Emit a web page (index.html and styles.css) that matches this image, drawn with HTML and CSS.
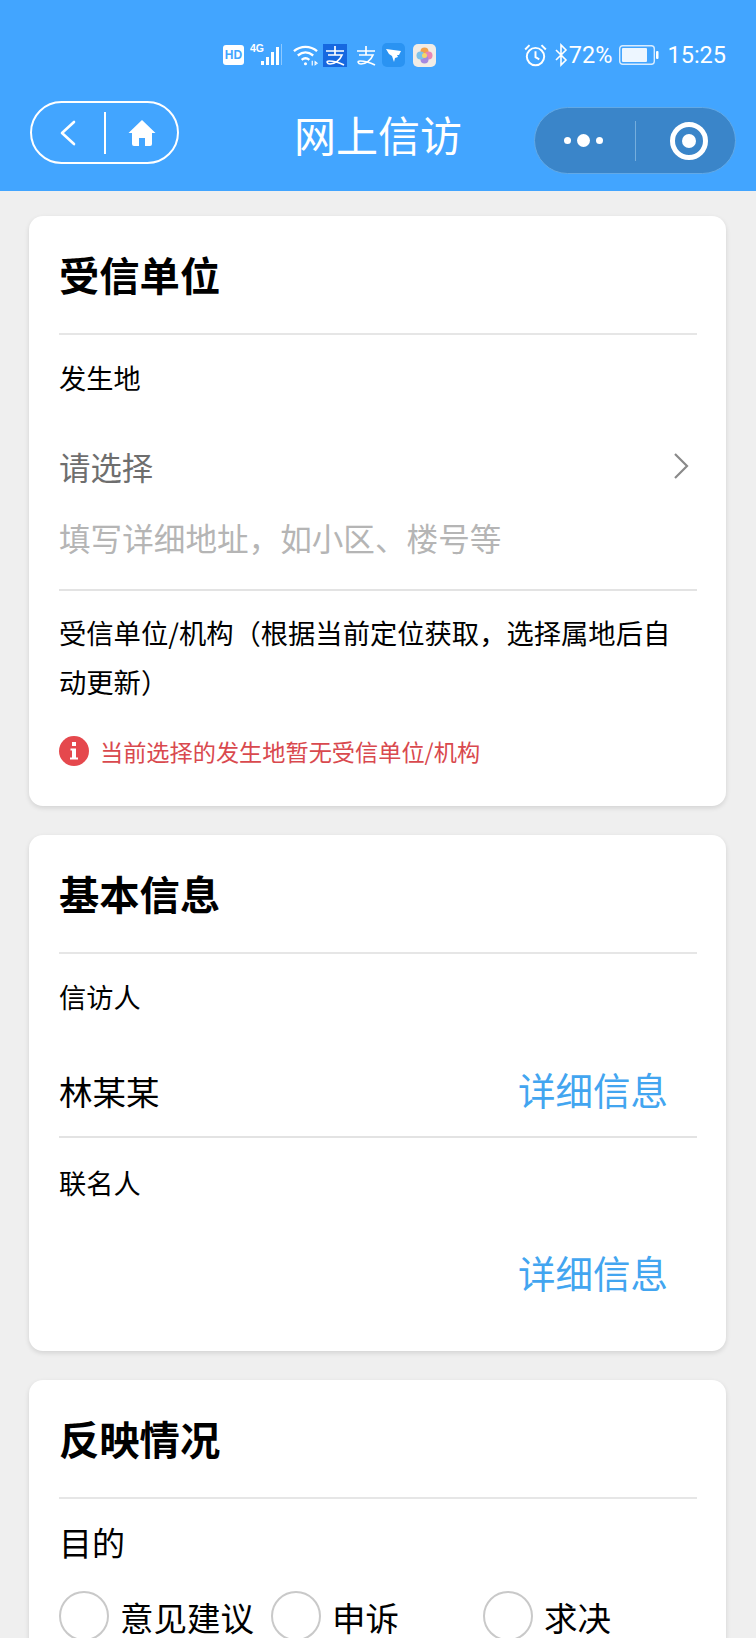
FILE: index.html
```html
<!DOCTYPE html>
<html lang="zh">
<head>
<meta charset="utf-8">
<title>网上信访</title>
<link rel="stylesheet" href="styles.css">
</head>
<body>
<header class="top">
  <div class="status">
    <div class="status-mid">
      <span class="hd">HD</span>
      <svg class="ic signal" width="33" height="24" viewBox="0 0 33 24"><text x="0" y="9" class="tiny">4G</text><g fill="#fff"><rect x="11" y="18" width="3" height="4"/><rect x="16" y="14" width="3" height="8"/><rect x="21" y="9" width="3" height="13"/><rect x="26" y="4" width="3" height="18"/></g><rect x="31" y="1" width="1" height="21" fill="#fff" opacity=".4"/></svg>
      <svg class="ic wifi" width="27" height="24" viewBox="0 0 28 24" fill="none" stroke="#fff" stroke-width="2.400"><path d="M2 8c7-6 17-6 24 0"/><path d="M6 12.500c5-4 11-4 16 0"/><path d="M10 17c2.500-2 5.500-2 8 0"/><circle cx="14" cy="21" r="1.600" fill="#fff" stroke="none"/><path d="M21 18v5M24 19l2 1.500-2 1.500z" stroke-width="1.200"/></svg>
      <svg class="pay" width="24" height="23" viewBox="0 0 24 23"><rect width="24" height="23" fill="#1668e0"/><path d="M3 7h18M12 2v9M5 11h14c-2 5-7 9-12 9-3 0-4-3-1-3 4 0 9 1 15 4" fill="none" stroke="#fff" stroke-width="1.700"/></svg>
      <svg class="ic zhi" width="24" height="23" viewBox="0 0 24 23"><path d="M3 7h18M12 2v9M5 11h14c-2 5-7 9-12 9-3 0-4-3-1-3 4 0 9 1 15 4" fill="none" stroke="#fff" stroke-width="1.700"/></svg>
      <svg class="ic shield" width="23" height="24" viewBox="0 0 23 24"><rect width="23" height="24" rx="5" fill="#2a93f2"/><path d="M4 6l15 2-2 4-2 0 1 2-3 1-1 4-2-6-3-2z" fill="#fff"/></svg>
      <svg class="ic" width="23" height="23" viewBox="0 0 23 23"><rect width="23" height="23" rx="5" fill="#f1ece6"/><circle cx="11.500" cy="7.500" r="4" fill="#f3a14b"/><circle cx="15.500" cy="11.500" r="4" fill="#e887b5"/><circle cx="11.500" cy="15.500" r="4" fill="#a58ae0"/><circle cx="7.500" cy="11.500" r="4" fill="#7cc2ea"/><circle cx="11.500" cy="11.500" r="2.500" fill="#f6d66a"/></svg>
    </div>
    <div class="status-right">
      <svg class="ic" width="25" height="25" viewBox="0 0 23 23" fill="none" stroke="#fff" stroke-width="1.800"><circle cx="11.500" cy="12.500" r="8"/><path d="M11.500 7.500v5.500l3.500 2M2 6l4-4M21 6l-4-4"/></svg>
      <svg class="ic bt" width="14" height="24" viewBox="0 0 14 24" fill="none" stroke="#fff" stroke-width="1.600"><path d="M2 7l10 10-5 5V2l5 5L2 17"/></svg>
      <span class="pct">72%</span>
      <svg class="ic batt" width="40" height="20" viewBox="0 0 40 20"><rect x=".7" y=".7" width="34.600" height="18.600" rx="3" fill="none" stroke="#d8ecff" stroke-width="1.400"/><rect x="3" y="3" width="25" height="14" rx="1" fill="#edf6ff"/><rect x="37" y="6" width="2.500" height="8" rx="1" fill="#fff"/></svg>
      <span class="time">15:25</span>
    </div>
  </div>
  <div class="nav">
    <div class="capsule-back">
      <svg width="18" height="26" viewBox="0 0 18 26" fill="none" stroke="#fff" stroke-width="2.600" stroke-linecap="round" stroke-linejoin="round"><path d="M15 2L3 13l12 11"/></svg>
      <span class="back-sep"></span>
      <svg width="28" height="28" viewBox="0 0 28 28" fill="#fff"><path d="M14 1L0.500 14H4v11a2 2 0 0 0 2 2h5v-8h6v8h5a2 2 0 0 0 2-2V14h3.500z"/></svg>
    </div>
    <h1 class="nav-title">网上信访</h1>
    <div class="capsule-menu">
      <div class="dots"><i></i><b></b><i></i></div>
      <span class="menu-sep"></span>
      <div class="target"><i></i></div>
    </div>
  </div>
</header>

<main class="page">
  <section class="card">
    <h2 class="card-title">受信单位</h2>
    <div class="label first">发生地</div>
    <div class="select"><span>请选择</span>
      <svg width="16" height="28" viewBox="0 0 16 28" fill="none" stroke="#8a8a8a" stroke-width="2.200"><path d="M2 2l12 12L2 26"/></svg>
    </div>
    <div class="placeholder">填写详细地址，如小区、楼号等</div>
    <div class="label org">受信单位/机构（根据当前定位获取，选择属地后自动更新）</div>
    <div class="error">
      <svg width="30" height="30" viewBox="0 0 30 30"><circle cx="15" cy="15" r="15" fill="#e5484d"/><path d="M13 6h4v4h-4zM11.500 12.500h5.500v9h2v2h-8v-2h2v-7h-1.500z" fill="#fff"/></svg>
      <span>当前选择的发生地暂无受信单位/机构</span>
    </div>
  </section>

  <section class="card">
    <h2 class="card-title">基本信息</h2>
    <div class="label first">信访人</div>
    <div class="row bordered"><span class="name">林某某</span><span class="link">详细信息</span></div>
    <div class="label second">联名人</div>
    <div class="row"><span class="name"></span><span class="link">详细信息</span></div>
  </section>

  <section class="card last">
    <h2 class="card-title">反映情况</h2>
    <div class="label big">目的</div>
    <div class="radios">
      <div class="radio"><i></i><span>意见建议</span></div>
      <div class="radio"><i></i><span>申诉</span></div>
      <div class="radio"><i></i><span>求决</span></div>
    </div>
  </section>
</main>
</body>
</html>
```

FILE: styles.css
```css
* { box-sizing: border-box; }
html, body { margin: 0; padding: 0; }
body {
  width: 756px;
  height: 1638px;
  overflow: hidden;
  background: #efefef;
  color: #000;
  font-family: "Noto Sans CJK SC", "Noto Sans", sans-serif;
}
.top {
  height: 191px;
  background: #42a5ff;
  color: #fff;
  display: flex;
  flex-direction: column;
}
.status {
  height: 101px;
  padding: 42px 30px 0 223px;
  display: flex;
  justify-content: space-between;
  align-items: flex-start;
}
.status-mid, .status-right { display: flex; align-items: center; height: 26px; }
.ic, .pay { display: block; flex: none; }
.tiny { font: bold 10.500px "Liberation Sans", sans-serif; fill: #fff; }
.hd {
  width: 21px; height: 20px; margin-right: 6px; background: #fff; border-radius: 3px;
  color: #42a5ff; font: bold 12px/20px "Liberation Sans", sans-serif; text-align: center;
}
.signal { margin-right: 9px; }
.wifi { margin-right: 4px; }
.pay { margin-right: 7px; }
.zhi { margin-right: 4px; }
.shield { margin-right: 8px; }
.bt { margin-left: 6px; }
.pct, .time { font: 23.500px/26px Roboto, sans-serif; color: #fff; }
.pct { margin-left: 1px; }
.batt { margin-left: 7px; }
.time { margin-left: 8px; }
.nav {
  height: 90px;
  position: relative;
  padding: 0 20px 0 30px;
  display: flex;
  justify-content: space-between;
  align-items: flex-start;
}
.capsule-back {
  width: 149px; height: 63px; border: 2px solid #fff; border-radius: 32px;
  display: flex; align-items: center;
  padding-left: 27px;
}
.back-sep { width: 2px; height: 42px; background: #fff; margin: 0 22px 0 27px; }
.nav-title {
  position: absolute; left: 0; right: 0; top: 5px; margin: 0;
  text-align: center; font-size: 42px; line-height: 56px; font-weight: 400; color: #fff;
}
.capsule-menu {
  width: 202px; height: 67px; margin-top: 6px; border-radius: 34px;
  background: #3a85c9; border: 1px solid #62a9e6;
  display: flex; align-items: center;
  padding-left: 29px;
}
.dots { display: flex; align-items: center; gap: 6px; width: 39px; flex: none; }
.dots i { width: 7px; height: 7px; border-radius: 50%; background: #fff; flex: none; }
.dots b { width: 13px; height: 13px; border-radius: 50%; background: #fff; flex: none; }
.menu-sep { width: 1px; height: 40px; background: #75aedd; margin-left: 32px; flex: none; }
.target {
  width: 38px; height: 38px; margin-left: 34px; border: 5px solid #fff; border-radius: 50%;
  display: flex; align-items: center; justify-content: center; flex: none;
}
.target i { width: 14px; height: 14px; border-radius: 50%; background: #fff; }

.page { padding: 25px 30px 0 29px; display: flex; flex-direction: column; gap: 29px; }
.card {
  background: #fff; border-radius: 14px; padding: 0 29px 0 30px;
  box-shadow: 0 2px 5px rgba(0,0,0,.12);
}
.card-title {
  margin: 0; height: 119px; border-bottom: 2px solid #e6e6e6;
  font-size: 40.300px; line-height: 116px; font-weight: 700;
}
.label { font-size: 27.200px; line-height: 44px; }
.first { margin-top: 20px; }
.select {
  margin-top: 37px; height: 60px; display: flex; align-items: center; justify-content: space-between;
  color: #6e6e6e; font-size: 31.400px; padding-right: 8px;
}
.placeholder {
  margin-top: 16px; height: 79px; border-bottom: 2px solid #e3e3e3;
  color: #b5b5b5; font-size: 31.600px; line-height: 50px; white-space: nowrap;
}
.org { margin-top: 17px; line-height: 49px; font-size: 27.300px; padding-right: 26px; }
.error {
  margin-top: 28px; padding-bottom: 38px; display: flex; align-items: center; gap: 11px;
  color: #d9494e; font-size: 23.200px; line-height: 34px;
}
.row {
  height: 72px; display: flex; align-items: center; justify-content: space-between; padding-right: 29px;
}
.bordered { margin-top: 26px; height: 94px; border-bottom: 2px solid #e3e3e3; }
.name { font-size: 33.500px; }
.link { color: #42a5f0; font-size: 37.500px; margin-bottom: 4px; }
.second { margin-top: 22px; }
.row:last-child { margin-top: 33px; margin-bottom: 42px; }
.last { padding-bottom: 30px; }
.big { font-size: 33px; line-height: 48px; margin-top: 19px; }
.radios { display: flex; margin-top: 25px; }
.radio { width: 212px; display: flex; align-items: center; gap: 11px; font-size: 33.500px; white-space: nowrap; }
.radio i { flex: none; width: 50px; height: 50px; border-radius: 50%; border: 2px solid #c9c9c9; }
```
